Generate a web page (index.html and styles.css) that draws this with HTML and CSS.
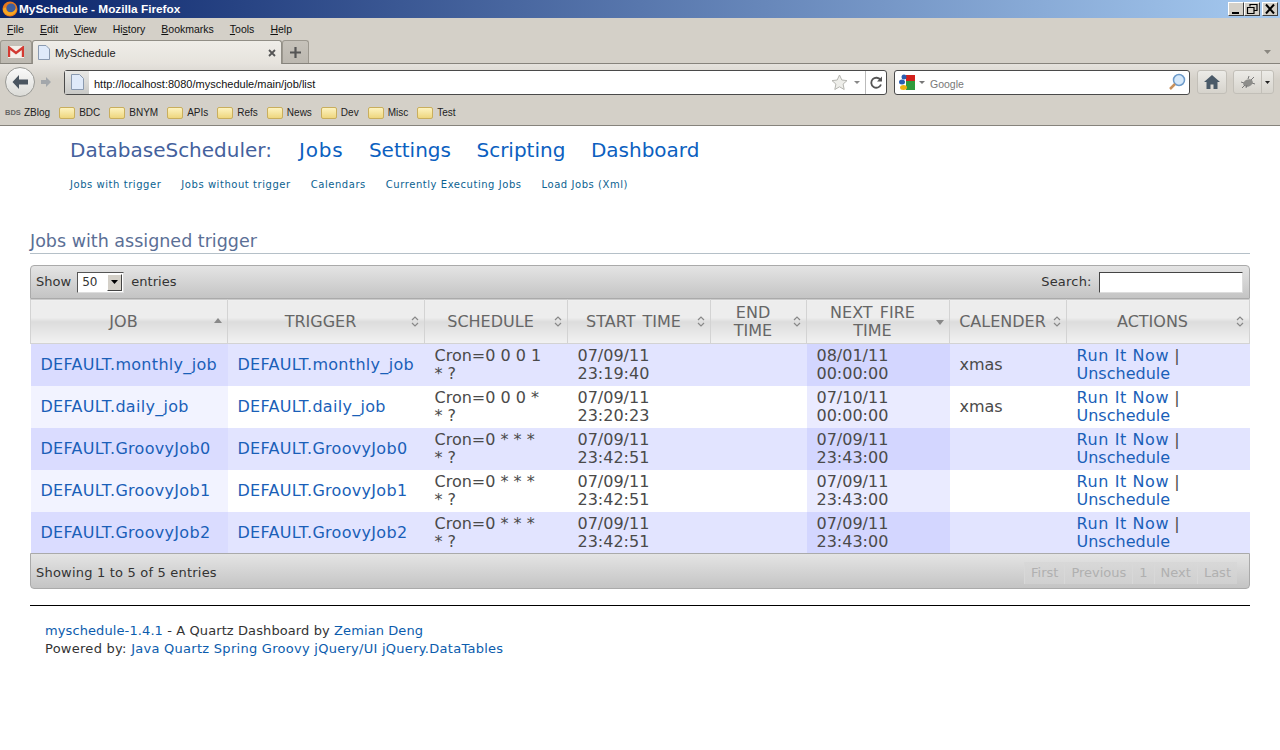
FILE: index.html
```html
<!DOCTYPE html>
<html lang="en">
<head>
    <meta charset="UTF-8">
    <title>MySchedule - Mozilla Firefox</title>
    <link rel="stylesheet" href="styles.css">
</head>
<body>
    <div class="titlebar">
        <svg class="fx-logo" width="16" height="16" viewBox="0 0 16 16"><circle cx="8" cy="8" r="7.5" fill="#e8781c"/><circle cx="9" cy="7" r="4.6" fill="#3f5f9e"/><path d="M1 9c1 5 7 7 11 4 2-1 3-4 2-6-1 3-4 5-7 4-2-.5-3-2-3-4C3 6 1 7 1 9z" fill="#f6a723"/></svg>
        <span class="title-text">MySchedule - Mozilla Firefox</span>
        <div class="win-btns">
            <span class="win-btn"><svg width="14" height="14" viewBox="0 0 14 14"><rect x="3" y="10" width="7" height="2" fill="#000"/></svg></span>
            <span class="win-btn"><svg width="14" height="14" viewBox="0 0 14 14"><path d="M5 4.5v-2h7v6H9.500M2.500 5.500h6.500v6h-6.500z" fill="none" stroke="#000" stroke-width="1.200"/></svg></span>
            <span class="win-btn close-btn"><svg width="14" height="14" viewBox="0 0 14 14"><path d="M3 2.500l8 9M11 2.500l-8 9" stroke="#000" stroke-width="2"/></svg></span>
        </div>
    </div>
    <div class="menubar">
        <span><u>F</u>ile</span><span><u>E</u>dit</span><span><u>V</u>iew</span><span>Hi<u>s</u>tory</span><span><u>B</u>ookmarks</span><span><u>T</u>ools</span><span><u>H</u>elp</span>
    </div>
    <div class="tabbar">
        <div class="pin-tab"><svg width="16" height="12" viewBox="0 0 16 12"><rect width="16" height="12" fill="#f4f0ea"/><path d="M1 11V1.500L8 7l7-5.500V11" fill="none" stroke="#d33a32" stroke-width="2.400"/></svg></div>
        <div class="tab">
            <svg class="page-ico" width="12" height="15" viewBox="0 0 12 15"><path d="M.5.500h7.500l3.500 3.500v10.500h-11z" fill="#dfeafa" stroke="#8a9ab0"/></svg>
            <span class="tab-label">MySchedule</span>
            <svg class="tab-x" width="8" height="8" viewBox="0 0 8 8"><path d="M1 1l6 6M7 1l-6 6" stroke="#555" stroke-width="1.800"/></svg>
        </div>
        <div class="new-tab"><svg width="11" height="11" viewBox="0 0 11 11"><path d="M5.500 0v11M0 5.500h11" stroke="#555" stroke-width="2.200"/></svg></div>
        <svg class="tab-list" width="7" height="4" viewBox="0 0 7 4"><path d="M0 0h7L3.500 4z" fill="#8a8780"/></svg>
    </div>
    <div class="navbar">
        <div class="back-btn"><svg width="18" height="16" viewBox="0 0 18 16"><path d="M8 1L1.500 8 8 15v-4.500h9v-5H8z" fill="#4a5560"/></svg></div>
        <div class="fwd-btn"><svg width="12" height="12" viewBox="0 0 12 12"><path d="M6 1l5 5-5 5V8H1V4h5z" fill="#a3a7ab"/></svg></div>
        <div class="urlbar">
            <div class="site-id"><svg width="13" height="16" viewBox="0 0 13 16"><path d="M.5.500h8l4 4v11h-12z" fill="#dfeafa" stroke="#8a9ab0"/></svg></div>
            <span class="url-text">http://localhost:8080/myschedule/main/job/list</span>
            <svg class="star" width="17" height="17" viewBox="0 0 17 17"><path d="M8.500 1l2.300 5 5.200.6-3.900 3.500 1.100 5.400-4.700-2.700-4.700 2.700 1.100-5.400L1 6.600 6.200 6z" fill="#eeeeea" stroke="#b5b5b0"/></svg>
            <svg class="url-drop" width="6" height="3" viewBox="0 0 6 3"><path d="M0 0h6L3 3z" fill="#888"/></svg>
            <div class="reload"><svg width="13" height="13" viewBox="0 0 13 13"><path d="M10.500 4A5 5 0 1 0 11 8.500" fill="none" stroke="#555" stroke-width="1.800"/><path d="M12 .5v5H7z" fill="#555"/></svg></div>
        </div>
        <div class="searchbar">
            <svg width="16" height="16" viewBox="0 0 16 16"><rect x="7" y="1" width="9" height="7" fill="#d2201c"/><rect x="7" y="7" width="9" height="9" fill="#2f9a3c"/><ellipse cx="5" cy="3" rx="2.500" ry="2.500" fill="#2a5db0"/><ellipse cx="3" cy="8" rx="3" ry="2.500" fill="#2a5db0"/><ellipse cx="4.500" cy="13.500" rx="3.500" ry="2.500" fill="#eeb211"/></svg>
            <svg class="search-drop" width="6" height="3" viewBox="0 0 6 3"><path d="M0 0h6L3 3z" fill="#777"/></svg>
            <span class="search-hint">Google</span>
            <svg class="glass" width="18" height="18" viewBox="0 0 18 18"><circle cx="11" cy="7" r="5.500" fill="#d5e8fa" stroke="#6d9bcb" stroke-width="1.500"/><path d="M7 11l-5 5" stroke="#c8915c" stroke-width="2.500"/></svg>
        </div>
        <div class="tool-btn home-btn"><svg width="16" height="14" viewBox="0 0 16 14"><path d="M8 0L0 7h2.500v7h4V9.500h3V14h4V7H16z" fill="#4a5a68"/></svg></div>
        <div class="tool-btn ext-btn">
            <div class="ext-main"><svg width="16" height="14" viewBox="0 0 16 14"><ellipse cx="8" cy="8" rx="5" ry="3.500" fill="#8d8d8a" transform="rotate(-25 8 8)"/><path d="M2 13l3-3M14 2l-3 3M1 7l3 1M15 9l-3-1M9 1l-1 3M6 13l1-3" stroke="#777" stroke-width="1"/></svg></div>
            <div class="ext-drop"><svg width="5" height="3" viewBox="0 0 5 3"><path d="M0 0h5L2.500 3z" fill="#222"/></svg></div>
        </div>
    </div>
    <div class="bookmarks">
        <span class="bm"><span class="bds">BDS</span>ZBlog</span>
        <span class="bm"><i class="folder"></i>BDC</span>
        <span class="bm"><i class="folder"></i>BNYM</span>
        <span class="bm"><i class="folder"></i>APIs</span>
        <span class="bm"><i class="folder"></i>Refs</span>
        <span class="bm"><i class="folder"></i>News</span>
        <span class="bm"><i class="folder"></i>Dev</span>
        <span class="bm"><i class="folder"></i>Misc</span>
        <span class="bm"><i class="folder"></i>Test</span>
    </div>

    <div class="page">
        <div class="main-nav">
            <span class="app-name">DatabaseScheduler:</span>
            <a href="#">Jobs</a>
            <a href="#">Settings</a>
            <a href="#">Scripting</a>
            <a href="#">Dashboard</a>
        </div>
        <div class="sub-nav">
            <a href="#">Jobs with trigger</a>
            <a href="#">Jobs without trigger</a>
            <a href="#">Calendars</a>
            <a href="#">Currently Executing Jobs</a>
            <a href="#">Load Jobs (Xml)</a>
        </div>
        <h2 class="section-title">Jobs with assigned trigger</h2>

        <div class="dt-top">
            <div class="dt-length">Show <span class="fake-select"><span>50</span><span class="select-btn"><svg width="7" height="4" viewBox="0 0 7 4"><path d="M0 0h7L3.500 4z" fill="#000"/></svg></span></span> entries</div>
            <div class="dt-search">Search: <input type="text" class="search-input"></div>
        </div>
        <table class="jobs">
            <colgroup>
                <col class="c-job"><col class="c-trigger"><col class="c-schedule"><col class="c-start"><col class="c-end"><col class="c-next"><col class="c-cal"><col class="c-act">
            </colgroup>
            <thead>
                <tr>
                    <th><span class="th-text">JOB</span><svg class="sort" width="8" height="11" viewBox="0 0 8 11"><path d="M0 7h8L4 2z" fill="#888"/></svg></th>
                    <th><span class="th-text">TRIGGER</span><svg class="sort" width="8" height="11" viewBox="0 0 8 11"><path d="M1 4l3-3 3 3M1 7l3 3 3-3" fill="none" stroke="#888" stroke-width="1.200"/></svg></th>
                    <th><span class="th-text">SCHEDULE</span><svg class="sort" width="8" height="11" viewBox="0 0 8 11"><path d="M1 4l3-3 3 3M1 7l3 3 3-3" fill="none" stroke="#888" stroke-width="1.200"/></svg></th>
                    <th><span class="th-text">START TIME</span><svg class="sort" width="8" height="11" viewBox="0 0 8 11"><path d="M1 4l3-3 3 3M1 7l3 3 3-3" fill="none" stroke="#888" stroke-width="1.200"/></svg></th>
                    <th><span class="th-text">END<br>TIME</span><svg class="sort" width="8" height="11" viewBox="0 0 8 11"><path d="M1 4l3-3 3 3M1 7l3 3 3-3" fill="none" stroke="#888" stroke-width="1.200"/></svg></th>
                    <th><span class="th-text">NEXT FIRE<br>TIME</span><svg class="sort" width="8" height="11" viewBox="0 0 8 11"><path d="M0 4h8L4 9z" fill="#888"/></svg></th>
                    <th><span class="th-text">CALENDER</span><svg class="sort" width="8" height="11" viewBox="0 0 8 11"><path d="M1 4l3-3 3 3M1 7l3 3 3-3" fill="none" stroke="#888" stroke-width="1.200"/></svg></th>
                    <th><span class="th-text">ACTIONS</span><svg class="sort" width="8" height="11" viewBox="0 0 8 11"><path d="M1 4l3-3 3 3M1 7l3 3 3-3" fill="none" stroke="#888" stroke-width="1.200"/></svg></th>
                </tr>
            </thead>
            <tbody>
                <tr class="odd">
                    <td class="sort2"><a class="job-link" href="#">DEFAULT.monthly_job</a></td>
                    <td><a class="job-link" href="#">DEFAULT.monthly_job</a></td>
                    <td>Cron=0 0 0 1<br>* ?</td>
                    <td>07/09/11<br>23:19:40</td>
                    <td></td>
                    <td class="sort1">08/01/11<br>00:00:00</td>
                    <td>xmas</td>
                    <td><a class="run-link" href="#">Run It Now</a> |<br><a href="#">Unschedule</a></td>
                </tr>
                <tr class="even">
                    <td class="sort2"><a class="job-link" href="#">DEFAULT.daily_job</a></td>
                    <td><a class="job-link" href="#">DEFAULT.daily_job</a></td>
                    <td>Cron=0 0 0 *<br>* ?</td>
                    <td>07/09/11<br>23:20:23</td>
                    <td></td>
                    <td class="sort1">07/10/11<br>00:00:00</td>
                    <td>xmas</td>
                    <td><a class="run-link" href="#">Run It Now</a> |<br><a href="#">Unschedule</a></td>
                </tr>
                <tr class="odd">
                    <td class="sort2"><a class="job-link" href="#">DEFAULT.GroovyJob0</a></td>
                    <td><a class="job-link" href="#">DEFAULT.GroovyJob0</a></td>
                    <td>Cron=0 * * *<br>* ?</td>
                    <td>07/09/11<br>23:42:51</td>
                    <td></td>
                    <td class="sort1">07/09/11<br>23:43:00</td>
                    <td></td>
                    <td><a class="run-link" href="#">Run It Now</a> |<br><a href="#">Unschedule</a></td>
                </tr>
                <tr class="even">
                    <td class="sort2"><a class="job-link" href="#">DEFAULT.GroovyJob1</a></td>
                    <td><a class="job-link" href="#">DEFAULT.GroovyJob1</a></td>
                    <td>Cron=0 * * *<br>* ?</td>
                    <td>07/09/11<br>23:42:51</td>
                    <td></td>
                    <td class="sort1">07/09/11<br>23:43:00</td>
                    <td></td>
                    <td><a class="run-link" href="#">Run It Now</a> |<br><a href="#">Unschedule</a></td>
                </tr>
                <tr class="odd">
                    <td class="sort2"><a class="job-link" href="#">DEFAULT.GroovyJob2</a></td>
                    <td><a class="job-link" href="#">DEFAULT.GroovyJob2</a></td>
                    <td>Cron=0 * * *<br>* ?</td>
                    <td>07/09/11<br>23:42:51</td>
                    <td></td>
                    <td class="sort1">07/09/11<br>23:43:00</td>
                    <td></td>
                    <td><a class="run-link" href="#">Run It Now</a> |<br><a href="#">Unschedule</a></td>
                </tr>
            </tbody>
        </table>
        <div class="dt-bottom">
            <div class="dt-info">Showing 1 to 5 of 5 entries</div>
            <div class="pager"><span>First</span><span>Previous</span><span>1</span><span>Next</span><span>Last</span></div>
        </div>
        <div class="footer">
            <div class="foot-line1"><a href="#">myschedule-1.4.1</a> - A Quartz Dashboard by <a href="#">Zemian Deng</a></div>
            <div class="foot-line2">Powered by: <a href="#">Java</a> <a href="#">Quartz</a> <a href="#">Spring</a> <a href="#">Groovy</a> <a href="#">jQuery/UI</a> <a href="#">jQuery.DataTables</a></div>
        </div>
    </div>
</body>
</html>
```
FILE: styles.css
```css
html, body {
    margin: 0;
    padding: 0;
    background-color: #fff;
}
body {
    font-family: "DejaVu Sans", Verdana, sans-serif;
    color: #333;
    height: 750px;
    overflow: hidden;
}
a {
    color: #0b5cad;
    text-decoration: none;
}

/* browser chrome */
.titlebar {
    height: 18px;
    display: flex;
    align-items: center;
    background: linear-gradient(to right, #0a246a, #a6caf0);
    color: #fff;
    font-family: "Liberation Sans", Arial, sans-serif;
    font-weight: bold;
    font-size: 11.8px;
    padding-left: 2px;
}
.title-text {
    margin-left: 1px;
}
.win-btns {
    margin-left: auto;
    display: flex;
    margin-right: 2px;
}
.win-btn {
    width: 16px;
    height: 14px;
    background-color: #d4d0c8;
    border: 1px solid;
    border-color: #fff #404040 #404040 #fff;
    box-sizing: border-box;
    display: flex;
    align-items: center;
    justify-content: center;
}
.close-btn {
    margin-left: 2px;
}
.menubar {
    height: 22px;
    background-color: #d4d0c8;
    display: flex;
    align-items: center;
    padding-left: 7px;
    gap: 16px;
    font-family: "Liberation Sans", Arial, sans-serif;
    font-size: 10.5px;
    color: #111;
}
.tabbar {
    height: 24px;
    background-color: #d4d0c8;
    border-bottom: 1px solid #86837c;
    display: flex;
    align-items: flex-end;
    box-sizing: border-box;
    font-family: "Liberation Sans", Arial, sans-serif;
    font-size: 11px;
}
.pin-tab {
    width: 32px;
    height: 23px;
    box-sizing: border-box;
    background: linear-gradient(#c6c2ba, #bcb8b0);
    border: 1px solid #9c988f;
    border-bottom: none;
    border-radius: 3px 3px 0 0;
    display: flex;
    align-items: center;
    justify-content: center;
}
.tab {
    width: 250px;
    height: 24px;
    box-sizing: border-box;
    margin-bottom: -1px;
    background: linear-gradient(#efede8, #e6e3dd);
    border: 1px solid #918e86;
    border-bottom: none;
    border-radius: 3px 3px 0 0;
    display: flex;
    align-items: center;
    padding: 0 5px;
    color: #222;
}
.tab-label {
    margin-left: 5px;
    padding-top: 1px;
}
.tab-x {
    margin-left: auto;
}
.new-tab {
    width: 27px;
    height: 23px;
    box-sizing: border-box;
    background: linear-gradient(#c6c2ba, #bcb8b0);
    border: 1px solid #9c988f;
    border-bottom: none;
    border-radius: 3px 3px 0 0;
    display: flex;
    align-items: center;
    justify-content: center;
}
.tab-list {
    margin: 0 9px 9px auto;
}
.navbar {
    height: 36px;
    background: linear-gradient(#e5e2dd, #d4d0c8 45%);
    display: flex;
    align-items: center;
    box-sizing: border-box;
    padding-left: 5px;
}
.back-btn {
    width: 30px;
    height: 30px;
    border-radius: 50%;
    box-sizing: border-box;
    border: 1px solid #9a9a96;
    background: linear-gradient(#fafafa, #dbdbd7);
    display: flex;
    align-items: center;
    justify-content: center;
    flex: none;
}
.fwd-btn {
    width: 22px;
    display: flex;
    justify-content: center;
    margin-right: 7px;
}
.urlbar {
    width: 823px;
    height: 25px;
    box-sizing: border-box;
    background-color: #fff;
    border: 1px solid #4a4a4a;
    border-radius: 3px;
    display: flex;
    align-items: center;
    font-family: "Liberation Sans", Arial, sans-serif;
    font-size: 11px;
    color: #111;
}
.site-id {
    width: 24px;
    height: 23px;
    background: linear-gradient(#e8e8e6, #c9c9c6);
    display: flex;
    align-items: center;
    justify-content: center;
    flex: none;
}
.url-text {
    margin-left: 5px;
    padding-top: 3px;
}
.star {
    margin-left: auto;
}
.url-drop {
    margin: 0 5px 0 6px;
}
.reload {
    width: 21px;
    height: 23px;
    border-left: 1px solid #bbb;
    display: flex;
    align-items: center;
    justify-content: center;
    box-sizing: border-box;
}
.searchbar {
    width: 296px;
    height: 25px;
    box-sizing: border-box;
    margin-left: 7px;
    background-color: #fff;
    border: 1px solid #4a4a4a;
    border-radius: 3px;
    display: flex;
    align-items: center;
    padding: 0 3px 0 4px;
    font-family: "Liberation Sans", Arial, sans-serif;
    font-size: 10.5px;
    color: #777;
}
.search-drop {
    margin-left: 4px;
}
.search-hint {
    margin-left: 5px;
    padding-top: 3px;
}
.glass {
    margin-left: auto;
}
.tool-btn {
    height: 24px;
    box-sizing: border-box;
    border: 1px solid #c2bfb8;
    border-radius: 3px;
    background: linear-gradient(#ecebe7, #d6d3cc);
    display: flex;
    align-items: center;
    justify-content: center;
}
.home-btn {
    width: 30px;
    margin-left: 7px;
}
.ext-btn {
    width: 41px;
    margin-left: 6px;
}
.ext-main {
    flex: 1;
    display: flex;
    justify-content: center;
}
.ext-drop {
    width: 11px;
    height: 22px;
    border-left: 1px solid #c2bfb8;
    display: flex;
    align-items: center;
    justify-content: center;
}
.bookmarks {
    height: 26px;
    box-sizing: border-box;
    background-color: #d4d0c8;
    border-bottom: 1px solid #86837c;
    display: flex;
    align-items: center;
    padding-left: 5px;
    gap: 9px;
    font-family: "Liberation Sans", Arial, sans-serif;
    font-size: 10px;
    color: #222;
}
.bm {
    display: flex;
    align-items: center;
}
.bds {
    width: 15px;
    margin-right: 4px;
    font-size: 7.5px;
    font-weight: bold;
    color: #666;
}
.folder {
    display: block;
    width: 16px;
    height: 12px;
    margin-right: 4px;
    box-sizing: border-box;
    background: linear-gradient(#fdf3c0, #eed67e);
    border: 1px solid #c9ae5d;
    border-radius: 2px;
}

/* page */
.page {
    padding: 0 30px;
}
.main-nav {
    display: flex;
    align-items: baseline;
    padding: 10px 0 0 40px;
    font-size: 20px;
    line-height: 28px;
}
.main-nav a {
    margin-left: 25.5px;
    color: #0b60c0;
}
.main-nav a:first-of-type {
    margin-left: 27px;
    letter-spacing: .8px;
}
.app-name {
    color: #44619d;
}
.sub-nav {
    display: flex;
    gap: 20px;
    padding: 14px 0 0 40px;
    font-size: 10px;
    line-height: 14px;
    letter-spacing: .55px;
}
.sub-nav a {
    color: #0b6291;
}
.section-title {
    margin: 39px 0 11px;
    padding-bottom: 2px;
    font-size: 17.5px;
    line-height: 20px;
    font-weight: normal;
    color: #5b6f96;
    border-bottom: 1px solid #b5c0c8;
}
.dt-top, .dt-bottom {
    display: flex;
    justify-content: space-between;
    align-items: center;
    box-sizing: border-box;
    font-size: 13px;
    color: #333;
    border: 1px solid #aaa;
    background: linear-gradient(#e4e4e4, #c4c4c4);
}
.dt-top {
    height: 34px;
    padding: 0 6px 0 5px;
    border-radius: 4px 4px 0 0;
}
.dt-bottom {
    height: 36px;
    margin-top: -1px;
    padding: 4px 5px 0;
    position: relative;
    border-radius: 0 0 4px 4px;
}
.dt-info {
    letter-spacing: .2px;
}
.dt-search {
    letter-spacing: .2px;
}
.fake-select {
    display: inline-flex;
    align-items: center;
    justify-content: space-between;
    vertical-align: middle;
    width: 47px;
    height: 21px;
    box-sizing: border-box;
    margin: 0 3px 0 2px;
    padding-left: 4px;
    background-color: #fff;
    border: 1px solid;
    border-color: #555 #ddd #ddd #555;
    font-size: 12px;
}
.select-btn {
    width: 15px;
    height: 17px;
    margin-right: 1px;
    background-color: #d4d0c8;
    border: 1px solid;
    border-color: #fff #444 #444 #fff;
    box-sizing: border-box;
    display: flex;
    align-items: center;
    justify-content: center;
}
.search-input {
    width: 144px;
    height: 21px;
    box-sizing: border-box;
    margin: 0 0 0 3px;
    vertical-align: middle;
    border: 1px solid;
    border-color: #444 #ddd #ddd #444;
}
.jobs {
    width: 1219px;
    table-layout: fixed;
    border-collapse: collapse;
    font-size: 16px;
}
.c-job, .c-trigger { width: 197px; }
.c-schedule, .c-start { width: 143px; }
.c-end { width: 96px; }
.c-next { width: 143px; }
.c-cal { width: 117px; }
.c-act { width: 183px; }
.jobs th {
    position: relative;
    height: 44px;
    padding: 0 13px 0 2px;
    box-sizing: border-box;
    font-weight: normal;
    line-height: 18px;
    word-spacing: 2px;
    color: #666;
    background: linear-gradient(#ededed, #ededed 40%, #dcdcdc 50%, #f2f2f2);
    border: 1px solid #d3d3d3;
    border-top-color: #ccc;
}
.sort {
    position: absolute;
    right: 5px;
    top: 16px;
}
.jobs td {
    height: 42px;
    padding: 0 10px;
    box-sizing: border-box;
    line-height: 18px;
    color: #4a4a4a;
    white-space: nowrap;
}
.jobs td a {
    color: #1a5fb8;
}
.jobs td a.job-link {
    letter-spacing: .3px;
}
.jobs td a.run-link {
    letter-spacing: .6px;
}
.odd td { background-color: #e2e4ff; }
.even td { background-color: #fff; }
.odd td.sort1 { background-color: #d3d6ff; }
.odd td.sort2 { background-color: #dadcff; }
.even td.sort1 { background-color: #eaebff; }
.even td.sort2 { background-color: #f2f3ff; }
.pager {
    display: flex;
    margin-right: 7px;
    color: #b0b0b0;
}
.pager span {
    padding: 3px 6px;
    line-height: 16px;
    background: linear-gradient(#d8d8d8, #d0d0d0);
    border-left: 1px solid #d8d8d8;
}
.footer {
    margin-top: 16px;
    padding: 16px 15px 0;
    border-top: 1px solid #000;
    font-size: 13px;
    line-height: 18.5px;
    color: #333;
}
.foot-line1 {
    letter-spacing: .1px;
}
.foot-line2 {
    letter-spacing: .27px;
}
```
